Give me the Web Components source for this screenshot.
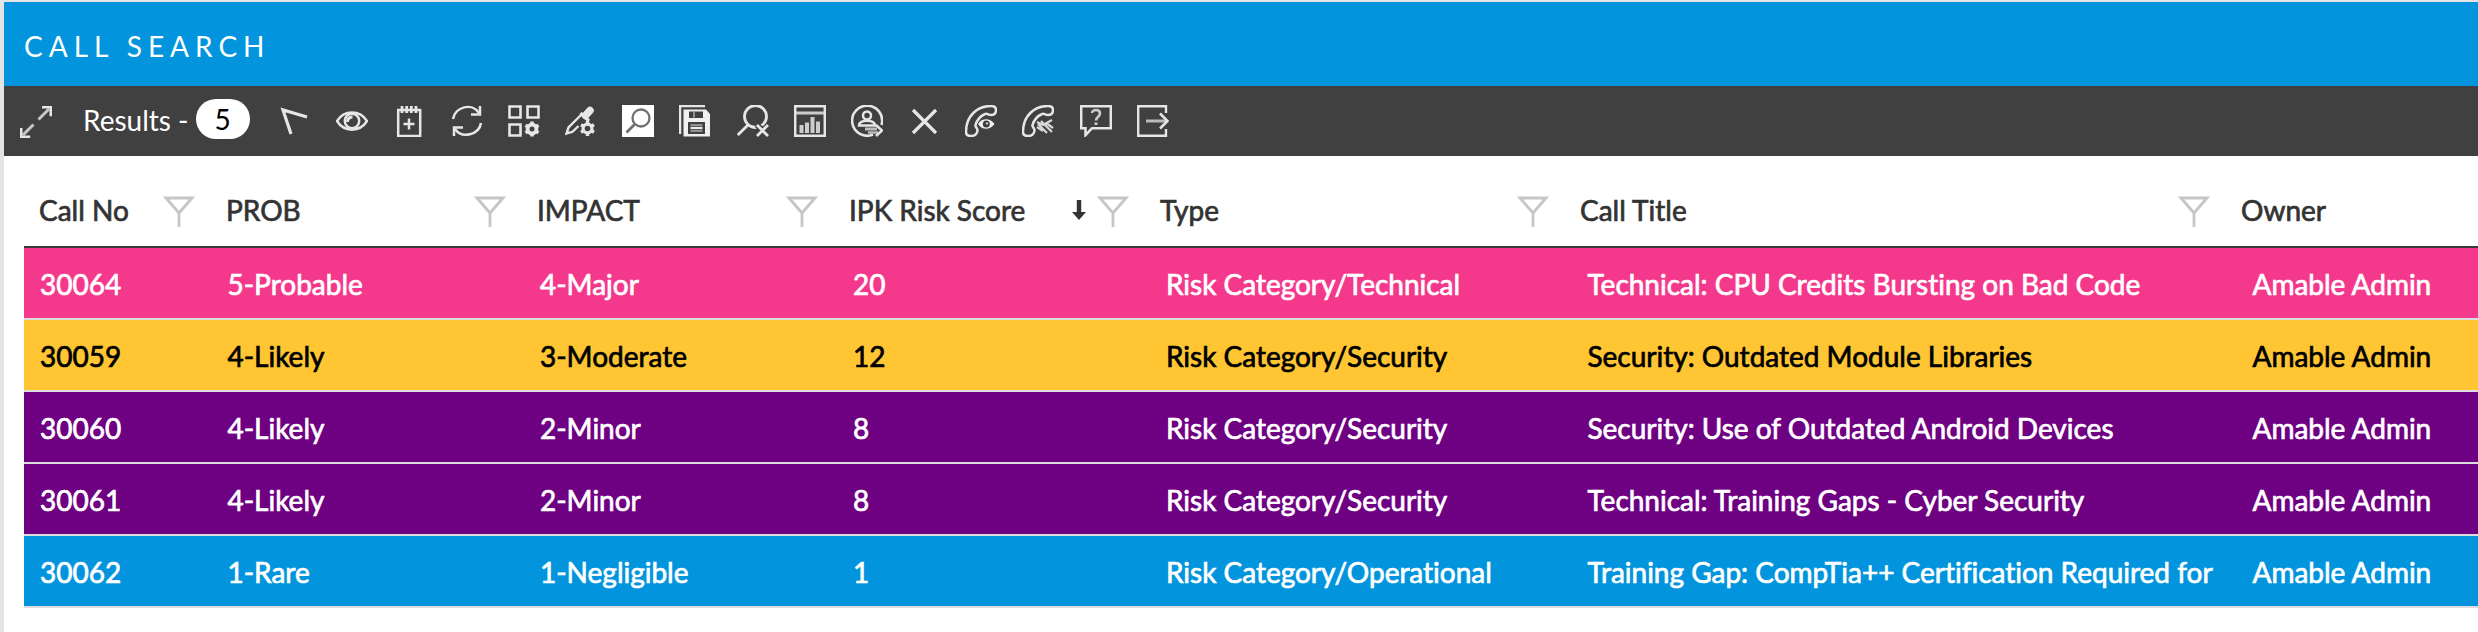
<!DOCTYPE html>
<html lang="en">
<head>
<meta charset="utf-8">
<title>Call Search</title>
<style>
  html, body {
    margin: 0;
    height: 100%;
    overflow: hidden;
    background: #fff;
    font-family: Lato, "Open Sans", sans-serif;
    font-size: 28px;
  }
</style>
</head>
<body>
<call-search heading="CALL SEARCH">
  <results-toolbar slot="toolbar" count="5">Results -</results-toolbar>
  <results-grid></results-grid>
</call-search>

<script>
/**
 * Toolbar and header icons, all on a 32 unit canvas.
 */
const icons = {
  expand: '<path d="M18.500 13.500 29 3M13.500 18.500 3 29" stroke-width="3" stroke="#c8c8c8"/><path d="M22 1.200h8.800v9M1.200 22v8.800h9" stroke-width="2.6"/>',
  cursor: '<path d="M12 29 4 5 28 12" stroke-width="3.2"/>',
  eye: '<path d="M1 16C8 4.500 24 4.500 31 16 24 27.500 8 27.500 1 16Z"/><circle cx="16" cy="16" r="7.200"/><path d="M11.500 17c0-3.500 2-5 5-5" stroke-width="3"/>',
  note: '<path d="M5.200 5h22v26h-22z"/><path d="M9 1v7M13.700 1v7M18.300 1v7M23 1v7" stroke-width="2.800"/><path d="M16 13.500v11M10.500 19h11"/>',
  refresh: '<path d="M2 14C4 2 21-3 28 8M30 18C28 30 11 34 4 24"/><path d="M29 1v8.500h-9M3 31v-8.500h9"/>',
  tiles: '<path d="M1.500 1.500h11v11h-11zM19.500 1.500h11v11h-11zM1.500 19.500h11v11h-11z" stroke-width="2.600"/><circle cx="24" cy="24" r="4.400" stroke-width="3.800"/><path d="M24 16.500v3M24 28.500v3M17.500 20.200l2.600 1.500M27.900 26.200l2.600 1.500M17.500 27.800l2.600-1.500M27.900 21.800l2.600-1.500" stroke-width="3.600"/>',
  dropper: '<path d="M16 10 3.500 22.500 1.500 28.500l6-1.700L13.500 21" stroke-width="2.400"/><path d="m15.500 8 8.500 8" stroke-width="3.200"/><path d="m20.500 10.500 4.500-5" stroke-width="7.500" stroke-linecap="round"/><circle cx="22.500" cy="23.500" r="4.400" stroke-width="3.200"/><path d="M22.500 16v3M22.500 28v3M16 19.700l2.600 1.500M26.400 25.700l2.600 1.500M16 27.300l2.600-1.500M26.400 21.300l2.600-1.500" stroke-width="3.400"/>',
  search: '<path d="M0 0h32v32H0z" fill="#fff" stroke="none"/><g stroke="#707070"><circle cx="19" cy="13" r="8.500" stroke-width="2.300"/><path d="M13 19 4.500 27.500" stroke-width="2.800"/></g>',
  save: '<path d="M1 29V1h25"/><path d="M4.500 4.500H27L31 9v22.500H4.500z" fill="#f0f0f0" stroke="none"/><path d="M10 6.500h14v6.500H10zM9 17h17v12H9z" fill="#404040" stroke="none"/><path d="M15 6.500v6M11.500 20h12M11.500 26h12" stroke="#aaa" stroke-width="1.500"/><path d="M11.500 23h12" stroke-width="2.400"/>',
  clear: '<circle cx="18.500" cy="11.500" r="11" stroke-width="2.800"/><path d="M11.500 19.500.8 30" stroke-width="2.800"/><path d="m20 20 11.500 11.500M31.500 20 20 31.500" stroke="#404040" stroke-width="6"/><path d="m20 20 11 11M31 20 20 31" stroke-width="2.800"/>',
  chart: '<path d="M1.200 1.200h29.600v29.600H1.200z"/><path d="M2 8h28" stroke="#ccc" stroke-width="3"/><path d="M7.500 28v-8M13 28V17.500M18.500 28V12M24 28V16.500" stroke-width="4" stroke="#ccc"/>',
  person: '<path d="M22 29.500A15 15 0 1 1 30.500 20" stroke-width="2.600"/><circle cx="16" cy="10.500" r="4"/><path d="M8 20.500c0-6.500 16-6.500 16 0z"/><path d="M14 24h12" stroke="#bbb" stroke-width="3"/><path d="M17 27.500h10" stroke="#bbb"/><path d="m25 20 6 5.500-6 5.500" stroke-width="2.600"/>',
  close: '<path d="m5 5 23 23M28 5 5 28" stroke-width="3.2"/>',
  callView: '<path d="M1 27C1 11 12 1 26 1c3 0 5 1.500 5 4 0 4-2 5-5 5-2.500 0-4-2-6-1-4.500 2-8 6-9.500 11-.5 2 2 3 2 5 0 4-3 6-6.500 6-3 0-5-1-5-4Z"/><path d="M12.500 19c4-7 13-7 17.500 0-4.500 7-13.500 7-17.500 0Z" fill="#eee" stroke="#404040" stroke-width="1"/><circle cx="21.300" cy="19" r="3.500" stroke="none" fill="#404040"/><circle cx="22" cy="18.500" r="1" fill="#fff" stroke="none"/>',
  callHandle: '<path d="M1 27C1 11 12 1 26 1c3 0 5 1.500 5 4 0 4-2 5-5 5-2.500 0-4-2-6-1-4.500 2-8 6-9.500 11-.5 2 2 3 2 5 0 4-3 6-6.500 6-3 0-5-1-5-4Z"/><path d="m15 17 6 3 9-5M19 16l11 11M16 19l9 9M15 22l6 4M24 18l7 5" stroke-width="2.200" stroke="#d8d8d8"/>',
  help: '<path d="M1.200 1.200h29.600v22H12l-6.500 7v-7H1.200z"/><path d="M12 8c0-4 8-4 8 .5 0 3-4 3.500-4 7" stroke-width="2.600" stroke="#ccc"/><path d="M16 17.500V20" stroke-width="3" stroke="#ccc"/>',
  leave: '<path d="M29 8V1.200H1.200v29.600H29V24" stroke-width="2.400"/><path d="M9 16h21" stroke="#bbb" stroke-width="3"/><path d="m23 8.500 7.500 7.500-7.500 7.500" stroke-width="2.600"/>',
  filter: '<path d="M3 3h26L16 18zM16 17v15" stroke="#c6c6c6" stroke-width="2.800"/>'
}

customElements.define('tool-icon',
  /**
   * A single line icon, picked by its name attribute.
   */
  class extends HTMLElement {
    connectedCallback() {
      this.attachShadow({ mode: 'open' }).innerHTML = `
        <style>
          :host { display: block; width: 32px; height: 32px; flex: none; }
          svg { display: block; width: 100%; height: 100%; fill: none; stroke: #e6e6e6; stroke-width: 2.5; }
        </style>
        <svg viewBox="0 0 32 32">${icons[this.getAttribute('name')]}</svg>`
    }
  }
)

customElements.define('results-toolbar',
  /**
   * The dark bar with the number of results and the actions.
   */
  class extends HTMLElement {
    connectedCallback() {
      const actions = ['cursor', 'eye', 'note', 'refresh', 'tiles', 'dropper', 'search', 'save', 'clear',
        'chart', 'person', 'close', 'callView', 'callHandle', 'help', 'leave']

      this.attachShadow({ mode: 'open' }).innerHTML = `
        <style>
          :host { display: flex; align-items: center; height: 68px; padding: 0 16px 2px; background: #404040; color: #fff; }
          .label { width: 112px; padding-left: 31px; white-space: nowrap; }
          .count { width: 54px; height: 40px; margin: -2px 29px 0 1px; border-radius: 20px; background: #fff; color: #000; line-height: 40px; text-align: center; text-indent: -1px; }
          .actions { display: flex; gap: 25.2px; margin-top: 2px; }
          .expand { margin-top: 4px; }
        </style>
        <tool-icon class="expand" name="expand"></tool-icon>
        <span class="label"><slot></slot></span>
        <span class="count">${this.getAttribute('count')}</span>
        <div class="actions">${actions.map(name => `<tool-icon name="${name}"></tool-icon>`).join('')}</div>`
    }
  }
)

customElements.define('grid-heading',
  /**
   * A column heading with its sort arrow and filter.
   */
  class extends HTMLElement {
    connectedCallback() {
      this.attachShadow({ mode: 'open' }).innerHTML = `
        <style>
          :host { display: flex; align-items: center; box-sizing: border-box; padding: 0 16px 0 15px; color: #333; white-space: nowrap; }
          .text { flex: 1; }
          .sort { width: 14px; height: 20px; margin: -1px 11px 0 0; fill: #333; }
          tool-icon { margin-top: 1px; }
        </style>
        <span class="text"><slot></slot></span>
        ${this.hasAttribute('sorted') ? '<svg class="sort" viewBox="0 0 14 20"><path d="M4.800 0h4.400v12H14l-7 8-7-8h4.800z"/></svg>' : ''}
        <tool-icon name="filter"></tool-icon>`
    }
  }
)

customElements.define('grid-row',
  /**
   * One call, painted in the colour of its risk.
   */
  class extends HTMLElement {
    connectedCallback() {
      this.attachShadow({ mode: 'open' }).innerHTML = `
        <style>
          :host {
            display: grid;
            grid-template-columns: 187.5px 312.5px 313px 313px 421.500px 665px 300px;
            align-items: center;
            box-sizing: border-box;
            height: 72px;
            padding: 1px 0 0 16px;
            border-bottom: 2px solid #dddddf;
            color: #fff;
          }
          :host([risk="severe"]) { background: #f4398c; }
          :host([risk="high"]) { background: #ffc532; color: #000; }
          :host([risk="medium"]) { background: #6e0082; }
          :host([risk="low"]) { background: #0295dd; }
          ::slotted(span) { white-space: nowrap; }
        </style>
        <slot></slot>`
    }
  }
)

customElements.define('results-grid',
  /**
   * The table of calls.
   */
  class extends HTMLElement {
    columns = ['Call No', 'PROB', 'IMPACT', 'IPK Risk Score', 'Type', 'Call Title', 'Owner']

    calls = [
      ['severe', '30064', '5-Probable', '4-Major', '20', 'Risk Category/Technical', 'Technical: CPU Credits Bursting on Bad Code', 'Amable Admin'],
      ['high', '30059', '4-Likely', '3-Moderate', '12', 'Risk Category/Security', 'Security: Outdated Module Libraries', 'Amable Admin'],
      ['medium', '30060', '4-Likely', '2-Minor', '8', 'Risk Category/Security', 'Security: Use of Outdated Android Devices', 'Amable Admin'],
      ['medium', '30061', '4-Likely', '2-Minor', '8', 'Risk Category/Security', 'Technical: Training Gaps - Cyber Security', 'Amable Admin'],
      ['low', '30062', '1-Rare', '1-Negligible', '1', 'Risk Category/Operational', 'Training Gap: CompTia++ Certification Required for', 'Amable Admin']
    ]

    connectedCallback() {
      this.attachShadow({ mode: 'open' }).innerHTML = `
        <style>
          :host { display: block; margin-left: 20px; overflow: hidden; letter-spacing: -0.01px; -webkit-text-stroke: 0.7px currentColor; }
          .head {
            display: grid;
            grid-template-columns: 187px 311px 312px 311px 420px 661px 350px;
            box-sizing: border-box;
            height: 92px;
            padding-top: 18px;
            border-bottom: 2px solid #3a3a3a;
          }
        </style>
        <div class="head">
          ${this.columns.map(name => `<grid-heading${name === 'IPK Risk Score' ? ' sorted' : ''}>${name}</grid-heading>`).join('')}
        </div>
        ${this.calls.map(([risk, ...cells]) => `<grid-row risk="${risk}">${cells.map(cell => `<span>${cell}</span>`).join('')}</grid-row>`).join('')}`
    }
  }
)

customElements.define('call-search',
  /**
   * The page frame: title bar, toolbar slot and content.
   */
  class extends HTMLElement {
    connectedCallback() {
      this.attachShadow({ mode: 'open' }).innerHTML = `
        <style>
          :host { display: block; box-sizing: border-box; height: 100%; border-top: 2px solid #e4e4e4; border-left: 4px solid #e4e4e4; }
          header { box-sizing: border-box; height: 84px; padding: 4px 0 0 20px; background: #0295dd; color: #fff; line-height: 80px; letter-spacing: 6px; }
        </style>
        <header>${this.getAttribute('heading')}</header>
        <slot name="toolbar"></slot>
        <slot></slot>`
    }
  }
)
</script>
</body>
</html>
